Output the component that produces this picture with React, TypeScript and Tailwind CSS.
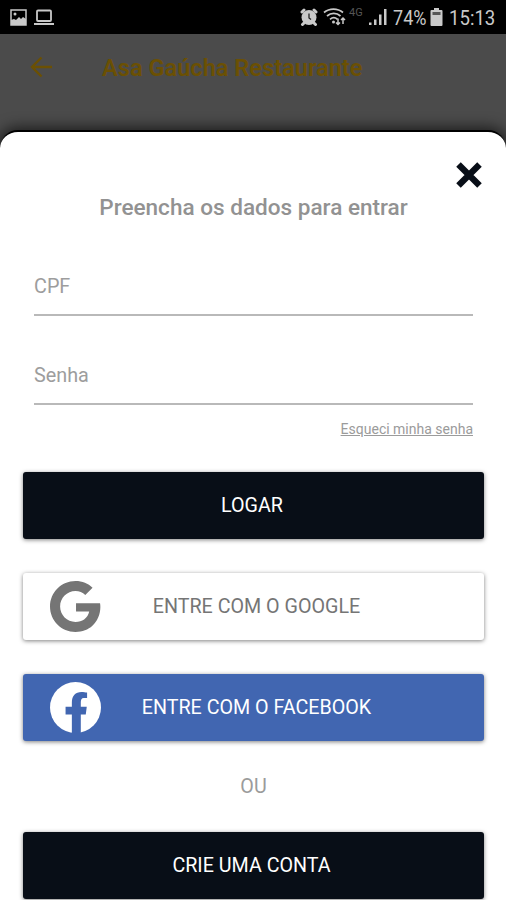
import type { ReactNode } from 'react'
import clsx from 'clsx'

function StatusBar() {
  return (
    <div className="flex h-[34px] shrink-0 items-center justify-between bg-black pl-[10px] pr-[11px] text-[#c9c9c9]">
      <div className="flex items-center gap-[7px]">
        <svg width="17" height="17" viewBox="0 0 17 17">
          <path d="M1 1h15v15H1z" fill="none" stroke="currentColor" strokeWidth="1.5" />
          <path d="M1 16v-5l3-1 2 1 3-3 2 2 2-2 3 2v6z" fill="currentColor" />
          <circle cx="5" cy="5" r="1.5" fill="currentColor" />
        </svg>
        <svg width="20" height="17" viewBox="0 0 20 17">
          <rect x="3" y="1.5" width="14" height="10.5" rx="1" fill="none" stroke="currentColor" strokeWidth="1.8" />
          <path d="M0 14h20v2H0z" fill="currentColor" />
        </svg>
      </div>
      <div className="flex items-center">
        <svg width="18" height="18" viewBox="0 0 18 18">
          <circle cx="9" cy="9.5" r="7.5" fill="currentColor" />
          <path d="M2 4l2-2M16 4l-2-2M4 15l-1.5 1.5M14 15l1.5 1.5" stroke="currentColor" strokeWidth="3" strokeLinecap="round" />
          <path d="M9 5.500v4.500l2 1.500" fill="none" stroke="#222" strokeWidth="1.3" />
        </svg>
        <svg className="ml-[5px]" width="24" height="18" viewBox="0 0 24 18">
          <g fill="none" stroke="currentColor" strokeWidth="1.7">
            <path d="M1 4.500c5.500-4.500 13.500-4.500 19 0" />
            <path d="M4 8c4-3.600 9.500-3.600 13.500 0" />
            <path d="M7 11.300c2.300-2 5.300-2 7.500 0" />
          </g>
          <circle cx="10.5" cy="14" r="1.5" fill="currentColor" />
          <path d="M15 10.500v6M13 14.500l2 2 2-2M20 16v-6M18 12l2-2 2 2" fill="none" stroke="currentColor" strokeWidth="1.5" />
        </svg>
        <span className="mb-[10px] ml-[2px] w-[14px] text-[11px] leading-none text-[#555]">4G</span>
        <svg className="ml-[6px]" width="18" height="18" viewBox="0 0 18 18" fill="currentColor">
          <path d="M0 14.500h2.500V17H0zM5 11.500h2.500V17H5zM10 6.500h2.500V17H10zM15 1h2.500v16H15z" />
        </svg>
        <span className="ml-[6px] mt-[2px] w-[33px] origin-left scale-x-[.88] text-[20.5px] leading-none">74%</span>
        <svg className="ml-[4px]" width="13" height="18" viewBox="0 0 13 18">
          <path d="M4 0h5v2h2.500q1 0 1 1v14q0 1-1 1h-10q-1 0-1-1V3q0-1 1-1H4z" fill="currentColor" />
          <path d="M2.500 4h8v3h-8z" fill="#555" />
        </svg>
        <span className="ml-[6px] mt-[2px] w-[46px] origin-left scale-x-[.93] text-[20px] leading-none">15:13</span>
      </div>
    </div>
  )
}

function AppBar() {
  return (
    <div className="flex h-[96px] shrink-0 items-start bg-[#4b4b4b] pl-[30px] pt-[20px] text-[#6b5003]">
      <svg className="mt-[2px]" width="22" height="22" viewBox="0 0 22 22" fill="none" stroke="currentColor" strokeWidth="2.4">
        <path d="M11.500 1.500 2 11l9.500 9.500M2 11h20" />
      </svg>
      <h1 className="ml-[50px] whitespace-nowrap text-[23.6px] font-semibold leading-[28px]">Asa Gaúcha Restaurante</h1>
    </div>
  )
}

function Field({ label, type }: { label: string; type: string }) {
  return (
    <input
      type={type}
      placeholder={label}
      className="h-[57px] w-full border-b-2 border-[#b9b9b9] text-[19.8px] text-[#333] outline-none placeholder:text-[#9d9d9d]"
    />
  )
}

type ButtonProps = {
  children: ReactNode
  icon?: ReactNode
  className?: string
}

function Button({ children, icon, className }: ButtonProps) {
  return (
    <button
      className={clsx(
        'relative flex h-[67px] w-full shrink-0 items-center justify-center rounded-[3px] text-[19.7px] shadow-[0_1px_4px_rgba(0,0,0,0.5)]',
        className,
      )}
    >
      {icon && <span className="absolute left-[27px] top-[8px]">{icon}</span>}
      {children}
    </button>
  )
}

function GoogleIcon() {
  return (
    <svg width="51" height="51" viewBox="0 0 48 48" fill="#757575">
      <path d="M24 9.500c3.540 0 6.710 1.220 9.210 3.600l6.850-6.850C35.900 2.380 30.470 0 24 0 10.745 0 0 10.745 0 24s10.745 24 24 24c6.480 0 11.930-2.130 15.890-5.810C44.400 38.020 47.400 31.840 47.400 24.550c0-1.250-.1-2.350-.3-3.550H24.500v7.800h12.400c-.58 2.960-2.260 5.700-4.780 7.400-2.150 1.450-4.920 2.300-8.120 2.300-8 0-14.500-6.500-14.500-14.500S16 9.500 24 9.500z" />
    </svg>
  )
}

function FacebookIcon() {
  return (
    <svg width="51" height="51" viewBox="0 0 154 154">
      <circle cx="77" cy="77" r="77" fill="#fff" />
      <path
        d="M66 154V98H47V75h19V62c0-21 11-32 29-32 6 0 13 1 17 2v16h-10c-7 0-9 6-9 13v14h18l-3 23H93v56z"
        fill="#4166b1"
      />
    </svg>
  )
}

export default function App() {
  return (
    <div className="flex h-[900px] w-[506px] flex-col overflow-hidden bg-[#4b4b4b] font-['Roboto',sans-serif]">
      <StatusBar />
      <AppBar />

      {/* Login sheet */}
      <div className="relative flex flex-1 flex-col rounded-t-[18px] border-t-2 border-black bg-white pl-[23px] pr-[22px] shadow-[0_0_14px_3px_rgba(0,0,0,0.6)]">
        <button className="absolute right-[23px] top-[29px]" aria-label="Fechar">
          <svg width="28" height="28" viewBox="0 0 28 28" stroke="#080e17" strokeWidth="6.4">
            <path d="M3.500 3.500l21 21M24.500 3.500l-21 21" />
          </svg>
        </button>

        <h2 className="mt-[62px] text-center text-[22.55px] font-medium leading-[28px] text-[#929292]">
          Preencha os dados para entrar
        </h2>

        <div className="mt-[37px] flex flex-col gap-8 px-[11px]">
          <Field label="CPF" type="text" />
          <Field label="Senha" type="password" />
        </div>
        <a className="mr-[11px] mt-[15px] self-end text-[14px] leading-[18px] text-[#9b9b9b] underline">
          Esqueci minha senha
        </a>

        <Button className="mt-[34px] bg-[#080e17] pr-[3px] text-white">LOGAR</Button>
        <Button className="mt-[34px] bg-white pl-[6px] text-[#757575]" icon={<GoogleIcon />}>
          ENTRE COM O GOOGLE
        </Button>
        <Button className="mt-[34px] bg-[#4166b1] pl-[6px] text-white" icon={<FacebookIcon />}>
          ENTRE COM O FACEBOOK
        </Button>
        <p className="mb-[31px] mt-[32px] text-center text-[19.7px] leading-[28px] text-[#9b9b9b]">OU</p>
        <Button className="bg-[#080e17] pr-[4px] text-white">CRIE UMA CONTA</Button>
      </div>
    </div>
  )
}
